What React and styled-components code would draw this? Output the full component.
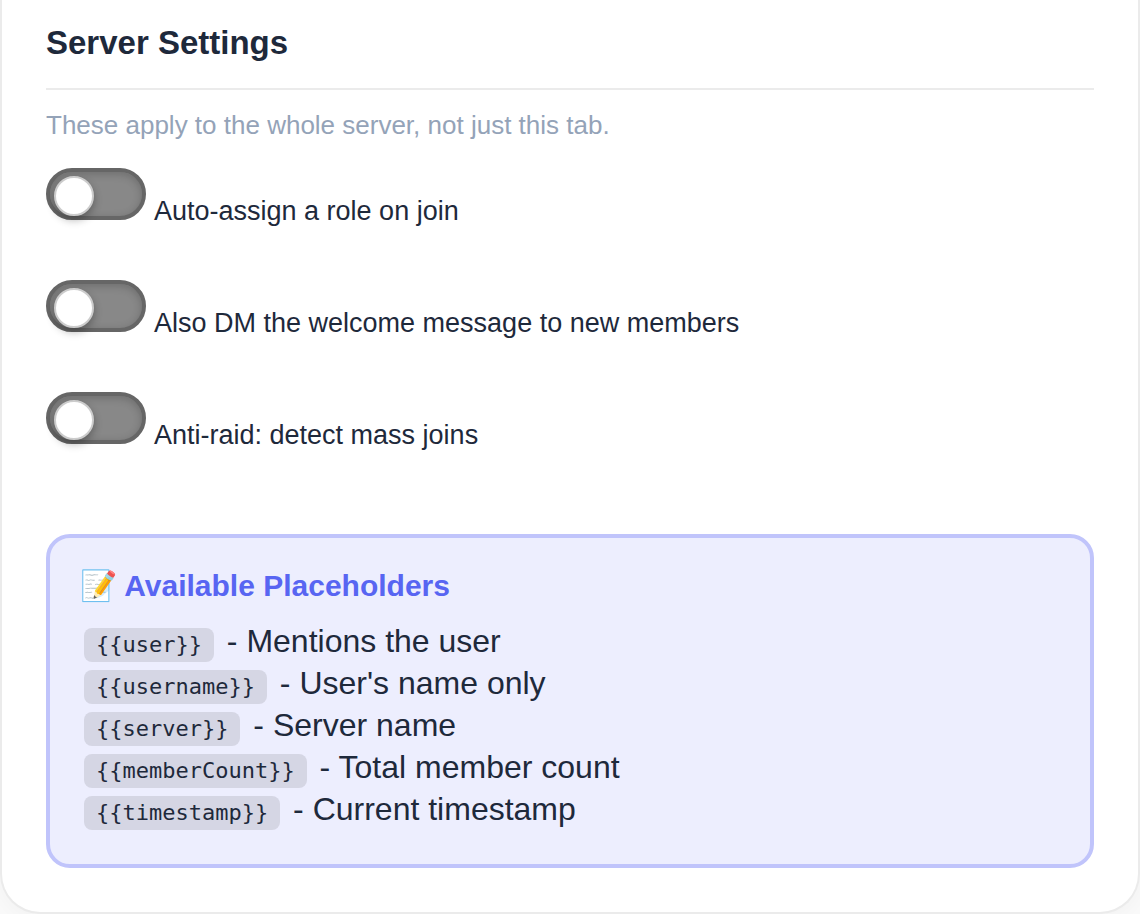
import React, { useState } from "react";
import styled, { createGlobalStyle } from "styled-components";

const ink = "#1e293b";
const muted = "#94a3b8";
const accent = "#5865f2";
const hairline = "#ebebeb";

const sans = `"Liberation Sans", Arial, sans-serif`;
const mono = `"DejaVu Sans Mono", monospace`;

const GlobalStyle = createGlobalStyle`
  *,
  *::before {
    box-sizing: border-box;
  }

  body {
    margin: 0;
    background: #fafafa;
    color: ${ink};
    font-family: ${sans};
  }
`;

const Card = styled.section`
  padding: 22px 44px 44px;
  background: #fff;
  border: 2px solid ${hairline};
  border-top: 0;
  border-radius: 0 0 40px 40px;
  box-shadow: 0 4px 24px rgba(0, 0, 0, 0.04);
`;

const Title = styled.h2`
  margin: 0;
  padding-bottom: 24px;
  border-bottom: 2px solid ${hairline};
  font-size: 33px;
  line-height: 42px;
`;

const Hint = styled.p`
  margin: 18px 0 26px;
  color: ${muted};
  font-size: 26px;
  line-height: 34px;
`;

const Options = styled.div`
  display: grid;
  gap: 52px;
  margin-bottom: 82px;
`;

const Option = styled.label`
  display: flex;
  align-items: flex-start;
  gap: 8px;
  cursor: pointer;
`;

const OptionText = styled.span`
  padding-top: 26px;
  font-size: 27px;
  line-height: 34px;
`;

const Toggle = styled.input.attrs({ type: "checkbox" })`
  appearance: none;
  display: flex;
  flex: none;
  width: 100px;
  height: 52px;
  margin: 0;
  padding: 4px;
  border: 4px solid #666;
  border-radius: 26px;
  background: ${(props) => (props.checked ? accent : "#888")};
  box-shadow: inset 0 2px 8px rgba(0, 0, 0, 0.2);
  cursor: pointer;

  &::before {
    content: "";
    width: 40px;
    height: 40px;
    margin-left: ${(props) => (props.checked ? "44px" : "0")};
    border: 2px solid #ccc;
    border-radius: 50%;
    background: #fff;
    box-shadow: 0 4px 8px rgba(0, 0, 0, 0.3);
  }
`;

const Placeholders = styled.section`
  padding: 28px 30px 34px;
  background: #edeefe;
  border: 4px solid #c0c4fb;
  border-radius: 24px;
`;

const PlaceholdersTitle = styled.h3`
  margin: 0 0 14px;
  color: ${accent};
  font-size: 30px;
  line-height: 40px;
`;

const List = styled.ul`
  margin: 0;
  padding: 0;
  list-style: none;
  font-size: 32px;
  line-height: 42px;
`;

const Code = styled.code`
  margin: 0 4px;
  padding: 4px 12px 5px;
  border-radius: 8px;
  background: #d5d6e4;
  font-family: ${mono};
  font-size: 22px;
  line-height: 26px;
`;

const options = [
  { id: "autoRole", label: "Auto-assign a role on join" },
  { id: "dmWelcome", label: "Also DM the welcome message to new members" },
  { id: "antiRaid", label: "Anti-raid: detect mass joins" },
];

const placeholders = [
  { token: "user", text: "Mentions the user" },
  { token: "username", text: "User's name only" },
  { token: "server", text: "Server name" },
  { token: "memberCount", text: "Total member count" },
  { token: "timestamp", text: "Current timestamp" },
];

const App = () => {
  const [settings, setSettings] = useState({});

  const toggle = (id) => setSettings({ ...settings, [id]: !settings[id] });

  return (
    <>
      <GlobalStyle />
      <Card>
        <Title>Server Settings</Title>
        <Hint>These apply to the whole server, not just this tab.</Hint>

        <Options>
          {options.map(({ id, label }) => (
            <Option key={id} htmlFor={id}>
              <Toggle
                id={id}
                checked={Boolean(settings[id])}
                onChange={() => toggle(id)}
              />
              <OptionText>{label}</OptionText>
            </Option>
          ))}
        </Options>

        <Placeholders>
          <PlaceholdersTitle>📝 Available Placeholders</PlaceholdersTitle>
          <List>
            {placeholders.map(({ token, text }) => (
              <li key={token}>
                <Code>{`{{${token}}}`}</Code> - {text}
              </li>
            ))}
          </List>
        </Placeholders>
      </Card>
    </>
  );
};

export default App;
